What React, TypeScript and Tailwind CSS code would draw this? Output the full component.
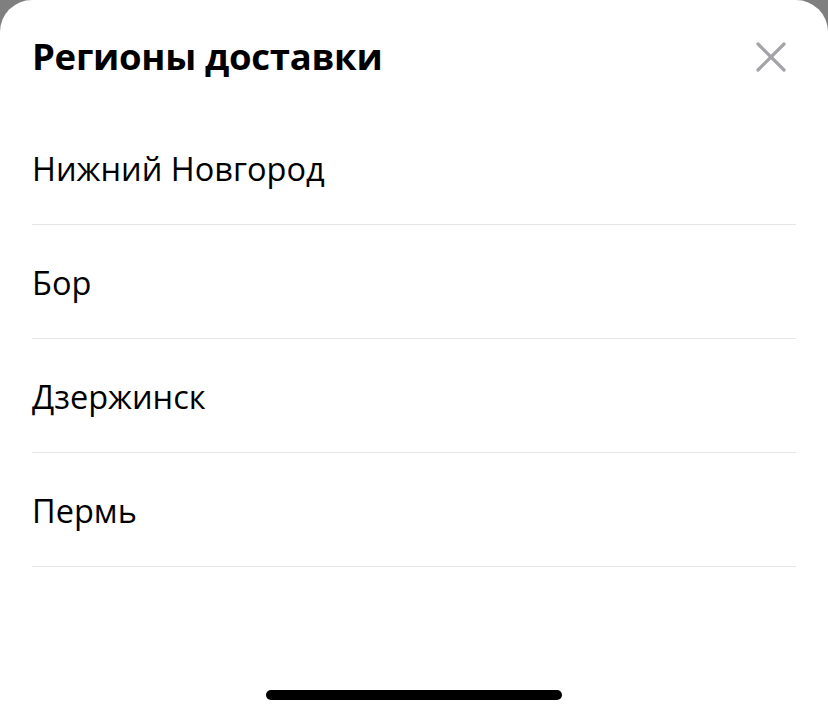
import React from "react";

const regions = ["Нижний Новгород", "Бор", "Дзержинск", "Пермь"];

const CloseIcon = () => (
  <svg width="30" height="30" viewBox="0 0 30 30" fill="none">
    <path
      d="M2 2L28 28M28 2L2 28"
      stroke="#a3a3a8"
      strokeWidth="3.2"
      strokeLinecap="round"
    />
  </svg>
);

export default function App() {
  return (
    <div className="w-[828px] h-[716px] bg-[#7f7f7f] overflow-hidden">
      <div
        className="flex flex-col h-full bg-white rounded-t-[32px]"
        style={{ fontFamily: "'Open Sans', 'Noto Sans', sans-serif" }}
      >
        <div className="flex items-center justify-between h-[111px] pl-8 pr-[42px] pt-[2px]">
          <h1 className="text-[36.5px] font-bold text-black tracking-[-0.3px]">
            Регионы доставки
          </h1>
          <button className="flex items-center justify-center">
            <CloseIcon />
          </button>
        </div>
        <ul className="flex flex-col px-8">
          {regions.map((r) => (
            <li
              key={r}
              className="flex items-center h-[114px] border-b border-[#e6e6e6] text-[32.5px] text-black pt-[3px]"
            >
              {r}
            </li>
          ))}
        </ul>
        <div className="flex-1" />
        <div className="flex justify-center pb-[16px]">
          <div className="w-[296px] h-[10px] rounded-full bg-black" />
        </div>
      </div>
    </div>
  );
}
